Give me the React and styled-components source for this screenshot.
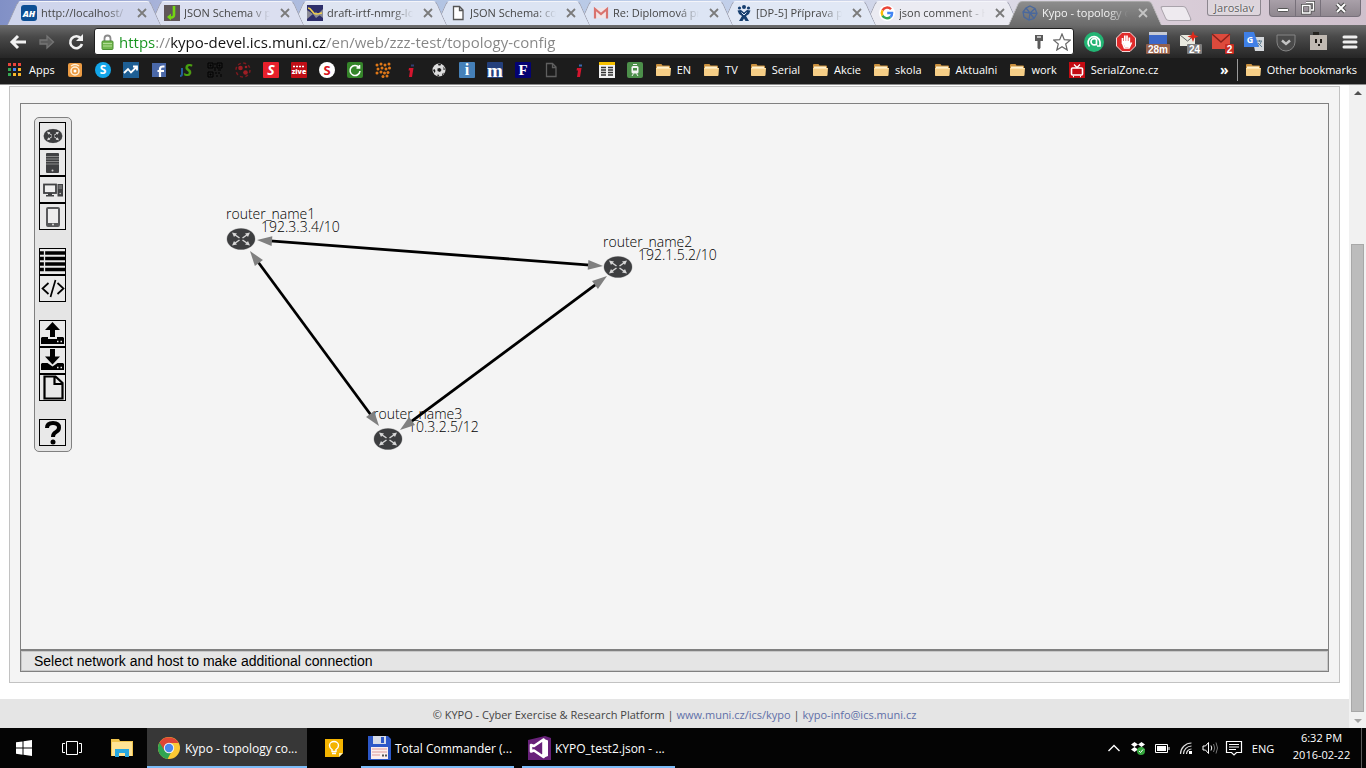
import React from "react";
import styled, { createGlobalStyle, css } from "styled-components";

const ui = '"Segoe UI", "Open Sans", "Noto Sans", sans-serif';

const GlobalStyle = createGlobalStyle`
  *, *::before, *::after { box-sizing: border-box; }
  body { margin: 0; font-family: ${ui}; font-size: 11px; background: #fff; }
  button, input { font-family: inherit; font-size: inherit; }
  a { text-decoration: none; }
`;

const plainButton = css`
  border: 0;
  padding: 0;
  margin: 0;
  background: none;
  color: inherit;
  display: flex;
  align-items: center;
  justify-content: center;
`;

const Screen = styled.div`
  display: flex;
  flex-direction: column;
  min-height: 100vh;
`;

/* ---------- tab strip ---------- */

const TabStrip = styled.header`
  display: flex;
  align-items: flex-start;
  height: 25px;
  padding: 0 5px 0 7px;
  background: linear-gradient(90deg, #8190c6 0, #a9b4da 12%, #b3c6e4 35%, #c3d0ea 55%, #dcdbe8 72%, #d9cdd8 86%, #cfc0cc 100%);
`;

const Tabs = styled.nav`
  display: flex;
  flex: 0 1 1144px;
  min-width: 0;
`;

const Tab = styled.div`
  position: relative;
  z-index: ${(p) => p.$z};
  display: flex;
  align-items: center;
  flex: 1 1 0;
  min-width: 0;
  height: 25px;
  padding: 1px 14px 0;
  margin-right: -11px;
  color: ${(p) => (p.$active ? "#f4f4f4" : "#454545")};

  &::before,
  &::after {
    content: "";
    position: absolute;
    z-index: -1;
    top: 1px;
    bottom: 0;
    width: 60%;
    background: ${(p) => (p.$active ? "linear-gradient(#8c8c8c, #6c6c6c)" : p.$tint)};
    border-top: 1px solid ${(p) => (p.$active ? "#a8a8a8" : "#f4f5fa")};
  }
  &::before {
    left: 0;
    transform-origin: bottom left;
    transform: skewX(-24deg);
    border-left: 1px solid ${(p) => (p.$active ? "#b5b5b5" : "#9a9cab")};
    border-top-left-radius: 4px;
  }
  &::after {
    right: 0;
    transform-origin: bottom right;
    transform: skewX(24deg);
    border-right: 1px solid ${(p) => (p.$active ? "#b5b5b5" : "#9a9cab")};
    border-top-right-radius: 4px;
  }
`;

const TabLink = styled.a`
  display: flex;
  align-items: center;
  gap: 4px;
  flex: 1;
  min-width: 0;
  color: inherit;
`;

const TabTitle = styled.span`
  flex: 1;
  min-width: 0;
  overflow: hidden;
  white-space: nowrap;
  line-height: 16px;
  mask-image: linear-gradient(90deg, #000 76%, transparent);
`;

const TabClose = styled.button`
  ${plainButton}
  width: 10px;
  height: 10px;
  margin-left: 10px;
  color: ${(p) => (p.$active ? "#c4c4c4" : "#7b7b7b")};
`;

const NewTab = styled.button`
  ${plainButton}
  width: 26px;
  height: 15px;
  margin: 6px 0 0 12px;
  border: 1px solid #a9a3ab;
  border-radius: 3px;
  background: #eeeaef;
  transform: skewX(24deg);
`;

const WindowTools = styled.div`
  display: flex;
  gap: 8px;
  margin-left: auto;
  color: #fff;
`;

const Profile = styled.button`
  ${plainButton}
  width: 54px;
  height: 16px;
  border: 1px solid #8c868e;
  border-top: 0;
  border-radius: 0 0 3px 3px;
  background: #ddd5dc;
  color: #5d5d5d;
  line-height: 14px;
  text-shadow: 0 0 2px #fff;
`;

const WindowButtons = styled.div`
  display: flex;
  height: 17px;
  border: 1px solid #77707a;
  border-top: 0;
  border-radius: 0 0 4px 4px;
  background: linear-gradient(#a9a0a9, #8f878f);
  overflow: hidden;
`;

const WindowButton = styled.button`
  ${plainButton}
  width: ${(p) => (p.$wide ? 40 : 25)}px;
  & + & { border-left: 1px solid #77707a; }
`;

/* ---------- address row ---------- */

const AddressRow = styled.div`
  display: flex;
  align-items: center;
  height: 33px;
  padding: 2px 0;
  background: linear-gradient(#6c6c6c, #4a4a4a 35%, #262626);
`;

const NavButton = styled.button`
  ${plainButton}
  width: 29px;
  height: 26px;
  margin-left: ${(p) => (p.$first ? 3 : 0)}px;
  color: ${(p) => (p.$off ? "#757575" : "#f2f2f2")};
`;

const AddressBox = styled.form`
  display: flex;
  align-items: center;
  flex: 1;
  min-width: 0;
  height: 27px;
  margin-left: 4px;
  padding: 0 2px 0 6px;
  gap: 5px;
  background: #fff;
  border: 1px solid #1f1f1f;
  border-radius: 3px;
`;

const AddressInput = styled.input`
  flex: 1;
  min-width: 0;
  height: 24px;
  padding: 0;
  border: 0;
  outline: 0;
  font-size: 15px;
  color: transparent;
  background-image: linear-gradient(90deg, #15931d 37px, #858585 37px 51px, #141414 51px 207px, #858585 207px);
  background-clip: text;
  -webkit-background-clip: text;
`;

const AddressAction = styled.button`
  ${plainButton}
  width: 18px;
  height: 22px;
`;

const Extensions = styled.div`
  display: flex;
  padding-left: 4px;
`;

const Extension = styled.button`
  ${plainButton}
  width: 32px;
  height: 27px;
`;

/* ---------- bookmarks ---------- */

const BookmarkBar = styled.nav`
  display: flex;
  align-items: center;
  gap: 12px;
  height: 27px;
  padding: 0 9px 2px 7px;
  background: #1c1c1c;
  border-bottom: 1px solid #8d8d8d;
  overflow: hidden;
`;

const Bookmark = styled.a`
  display: flex;
  align-items: center;
  gap: 6px;
  flex: none;
  color: #fff;
  line-height: 16px;
  white-space: nowrap;
`;

const Overflow = styled.button`
  ${plainButton}
  margin-left: auto;
  color: #fff;
  font-size: 14px;
  font-weight: 700;
  line-height: 16px;
`;

const OtherBookmarks = styled.div`
  display: flex;
  align-items: center;
  height: 22px;
  margin-left: -4px;
  padding-left: 7px;
  border-left: 1px solid #9a9a9a;
`;

/* ---------- page ---------- */

const Viewport = styled.div`
  display: flex;
  flex: 1;
`;

const Page = styled.div`
  display: flex;
  flex-direction: column;
  flex: 1;
  min-width: 0;
`;

const Panel = styled.main`
  display: flex;
  flex-direction: column;
  flex: 1;
  margin: 1px 9px 16px;
  padding: 16px 10px 10px;
  background: #f4f4f4;
  border: 1px solid #c2c2c2;
`;

const Workspace = styled.section`
  position: relative;
  flex: 1;
  min-height: 360px;
  padding: 13px;
  border: 1px solid #808080;
`;

const Diagram = styled.svg`
  position: absolute;
  inset: 0;
  width: 100%;
  height: 100%;
  font-family: "Open Sans", sans-serif;
  font-size: 14px;
  font-weight: 300;
  fill: #000;
`;

const Palette = styled.div`
  position: relative;
  display: inline-flex;
  flex-direction: column;
  gap: 18px;
  padding: 4px 5px 5px 4px;
  background: #e5e5e5;
  border: 1px solid #808080;
  border-radius: 5px;
`;

const ToolGroup = styled.div`
  display: flex;
  flex-direction: column;
`;

const Tool = styled.button`
  ${plainButton}
  width: 27px;
  height: 27px;
  border: 1px solid #000;
  background: #e9e9e9;
  color: #000;
`;

const Status = styled.div`
  height: 22px;
  padding: 0 13px;
  font-family: Arial, "Liberation Sans", sans-serif;
  font-size: 14px;
  line-height: 20px;
  color: #000;
  background: #e5e5e5;
  border: 1px solid #808080;
  box-shadow: inset 0 0 0 1px #c8c8c8;
`;

const Footer = styled.footer`
  padding: 8px 0 5px;
  text-align: center;
  font-family: "Open Sans", sans-serif;
  font-size: 11px;
  line-height: 16px;
  color: #444;
  background: #e5e5e5;
  a { color: #5f6fa8; }
`;

const ScrollTrack = styled.div`
  display: flex;
  flex-direction: column;
  align-items: center;
  width: 17px;
  padding: 6px 0 5px;
  background: #f1f1f1;
`;

const ScrollArrow = styled.span`
  width: 0;
  height: 0;
  border: 4px solid transparent;
  border-top-width: ${(p) => (p.$down ? 4 : 0)}px;
  border-bottom-width: ${(p) => (p.$down ? 0 : 4)}px;
  border-top-color: ${(p) => (p.$down ? "#a3a3a3" : "transparent")};
  border-bottom-color: ${(p) => (p.$down ? "transparent" : "#505050")};
`;

const ScrollThumb = styled.div`
  width: 13px;
  height: 74%;
  margin: auto 0 7px;
  background: #bcbcbc;
  border: 1px solid #a8a8a8;
`;

/* ---------- taskbar ---------- */

const Taskbar = styled.footer`
  display: flex;
  height: 40px;
  background: #040404;
  color: #fff;
`;

const Launcher = styled.button`
  ${plainButton}
  width: ${(p) => p.$w || 49}px;
  height: 40px;
`;

const Task = styled.button`
  ${plainButton}
  justify-content: flex-start;
  gap: 4px;
  width: ${(p) => (p.$active ? 160 : 153)}px;
  height: 40px;
  padding: 2px 0 0 ${(p) => (p.$active ? 10 : 6)}px;
  margin-right: ${(p) => (p.$active ? 0 : 8)}px;
  background: ${(p) => (p.$active ? "#373737" : "transparent")};
  border-bottom: 2px solid #7cbcf8;
  font-size: 12px;
  white-space: nowrap;
`;

const Tray = styled.div`
  display: flex;
  align-items: center;
  gap: 4px;
  margin-left: auto;
  padding-right: 4px;
`;

const TrayButton = styled.button`
  ${plainButton}
  width: 20px;
  height: 40px;
`;

const Language = styled.button`
  ${plainButton}
  width: 30px;
  height: 40px;
`;

const Clock = styled.time`
  width: 80px;
  padding: 1px 0 5px;
  text-align: center;
  line-height: 17px;
  border-right: 1px solid #5a5a5a;
`;

/* ---------- drawings ---------- */

const Svg = ({ w = 16, h = w, box = `0 0 ${w} ${h}`, children }) => (
  <svg width={w} height={h} viewBox={box} fill="none" aria-hidden="true">
    {children}
  </svg>
);

const Letter = ({ bg, fg = "#fff", children, family = "Open Sans", size = 13, round, x = 8, y = 13, italic }) => (
  <Svg>
    {round ? <circle cx="8" cy="8" r="8" fill={bg} /> : <rect width="16" height="16" rx="1" fill={bg} />}
    <text x={x} y={y} textAnchor="middle" fill={fg} fontFamily={family} fontWeight="700" fontSize={size} fontStyle={italic ? "italic" : "normal"}>
      {children}
    </text>
  </Svg>
);

const FileIcon = ({ stroke = "#555", fill = "none" }) => (
  <Svg>
    <path d="M3.5 1.5h6l3.5 3.5v9.5h-9.500zM9.500 1.500v4h3.500" stroke={stroke} fill={fill} strokeWidth="1.300" />
  </Svg>
);

const Folder = () => (
  <Svg>
    <path d="M1 3q0-1 1-1h4.500l1 1.500h6.500q1 0 1 1v8.500q0 1-1 1H2q-1 0-1-1z" fill="#c98f3d" />
    <path d="M2 4.500h12V6H2z" fill="#fff0cc" />
    <path d="M1 6h15l-.5 7q0 1-1 1H2q-1 0-1-1z" fill="#f6ce86" />
    <path d="M1.500 6.500h14" stroke="#fde4b0" />
  </Svg>
);

const GoogleG = () => (
  <Svg>
    <circle cx="8" cy="8" r="8" fill="#fff" />
    <g strokeWidth="2.400">
      <path d="M12 4.300A5.200 5.200 0 0 0 3.500 5.400" stroke="#ea4335" />
      <path d="M3.500 5.400a5.200 5.200 0 0 0 0 5.200" stroke="#fbbc05" />
      <path d="M3.500 10.600a5.200 5.200 0 0 0 7.900 1.400" stroke="#34a853" />
      <path d="M11.400 12a5 5 0 0 0 1.700-4H8.200" stroke="#4285f4" />
    </g>
  </Svg>
);

const Gmail = () => (
  <Svg>
    <path d="M1 3h14v10H1z" fill="#f1e4e6" />
    <path d="M2 13.500V4l6 5 6-5v9.500" stroke="#d9736e" strokeWidth="2.200" />
  </Svg>
);

const Jira = () => (
  <Svg>
    <g fill="#173f6f">
      <circle cx="8" cy="2" r="2" />
      <circle cx="3.500" cy="3" r="1.600" />
      <circle cx="12.500" cy="3" r="1.600" />
      <path d="M1.500 5.500L5 5l3 2.500L11 5l3.500.5L13 9l-3 2 3 5h-3.500L8 13.500 6.500 16H3l3-5-3-2z" />
    </g>
    <path d="M5.500 7.500L8 10l2.500-2.500" stroke="#dfe7f4" />
  </Svg>
);

const KypoMark = () => (
  <Svg>
    <path d="M8 1l5 2.500 2 5-3 5-5 1.500-5-3L1 7l3-4zM4 3l4 5 5-4.500M8 8L1 7M8 8l7 .5M8 8l-1 7M8 8l4 5.500" stroke="#4a689c" strokeWidth="1.300" />
  </Svg>
);

const Cross = () => (
  <Svg w={10}>
    <path d="M1 1l8 8M9 1L1 9" stroke="currentColor" strokeWidth="1.800" />
  </Svg>
);

const AtlasTab = () => (
  <Svg>
    <rect width="16" height="16" rx="3" fill="#0d4f94" />
    <text x="8" y="12" textAnchor="middle" fill="#fff" fontFamily="Open Sans" fontWeight="800" fontStyle="italic" fontSize="9">AH</text>
  </Svg>
);

const JsonSchemaTab = () => (
  <Svg>
    <rect width="16" height="16" fill="#5f5658" />
    <path d="M10 1v9q0 3-5 2.500" stroke="#74d613" strokeWidth="2.600" />
    <path d="M3 12l4-3.500v7z" fill="#74d613" />
  </Svg>
);

const IetfTab = () => (
  <Svg>
    <rect width="16" height="16" fill="#2e2f6b" />
    <path d="M0 5l6 4-6 5zM16 4v9l-5-4zM6 9l3-2 4 3-4 3z" fill="#8b8c95" />
    <path d="M1 3c4 0 4 6 8 6s4-1 6-1" stroke="#f5d24a" strokeWidth="1.500" />
  </Svg>
);

const RouterGlyph = () => (
  <g>
    <ellipse rx="14.500" ry="11" fill="#bdbdbd" />
    <ellipse rx="14" ry="10.500" fill="#3d3e40" />
    <path d="M-1.500-1l-5-3.500M1.500-1l5-3.500M-1.500 1l-5 3.500M1.500 1l5 3.500" stroke="#d6d6d6" strokeWidth="1.500" />
    <path d="M-9-6.500l5 1-3 3.500zM9-6.500l-5 1 3 3.500zM-9 6.500l5-1-3-3.500zM9 6.500l-5-1 3-3.500z" fill="#d6d6d6" />
  </g>
);

const toolIcons = {
  router: (
    <Svg w={20} h={16} box="-15 -12 30 24"><RouterGlyph /></Svg>
  ),
  server: (
    <Svg w={15} h={20}>
      <rect x="1" width="13" height="20" rx="1" fill="#404143" />
      <path d="M1 3.500h13M1 6h13M1 8.500h13M1 11h13" stroke="#9c9c9c" strokeWidth=".8" />
      <circle cx="7.500" cy="17.500" r="1" fill="#ccc" />
    </Svg>
  ),
  desktop: (
    <Svg w={20} h={14}>
      <rect x="1" y="1.500" width="12" height="8.500" fill="#efefef" stroke="#404143" strokeWidth="1.800" />
      <path d="M5 10h4v2h2v1.500H3V12h2zM14.500 1H20v12.500h-5.500z" fill="#404143" />
      <path d="M15.500 3h3.500M15.500 5h3.500" stroke="#bbb" strokeWidth=".7" />
      <circle cx="17.200" cy="10.500" r=".8" fill="#ccc" />
    </Svg>
  ),
  tablet: (
    <Svg w={14} h={20}>
      <rect x="1" y="1" width="12" height="18" rx="1" fill="#ededed" stroke="#58595b" strokeWidth="2" />
      <path d="M1 16h12v3H1z" fill="#58595b" />
      <circle cx="7" cy="17.500" r="1" fill="#ddd" />
    </Svg>
  ),
  list: (
    <Svg w={25} h={21}>
      <path d="M0 2h25M0 7.500h25M0 13h25M0 18.500h25" stroke="#000" strokeWidth="3.600" />
      <path d="M4.500 0v21" stroke="#e9e9e9" strokeWidth="1.300" />
    </Svg>
  ),
  code: (
    <Svg w={24} h={19}>
      <path d="M7.500 4L1.500 9.500l6 5.500M16.500 4l6 5.500-6 5.500M14.500 1l-5 17" stroke="#000" strokeWidth="1.700" />
    </Svg>
  ),
  upload: (
    <Svg w={25} h={25}>
      <path d="M12.500 1l7.500 8h-5v7h-5V9H5z" fill="#000" />
      <path d="M2 16h6v2h9v-2h6l1 1v6H1v-6z" fill="#000" />
      <path d="M17 20.500h1.500M20.500 20.500h1.500" stroke="#e9e9e9" strokeWidth="1.500" />
    </Svg>
  ),
  download: (
    <Svg w={25} h={25}>
      <path d="M10 1h5v7.500h5l-7.500 8-7.500-8h5z" fill="#000" />
      <path d="M2 15h5.500l5 3.500 5-3.500H23l1 1v6H1v-6z" fill="#000" />
      <path d="M17 19.500h1.500M20.500 19.500h1.500" stroke="#e9e9e9" strokeWidth="1.500" />
    </Svg>
  ),
  file: (
    <Svg w={22} h={25}>
      <path d="M2.500 1.500h11L20.500 8v15.500h-18zM12.500 1.500V9h8" stroke="#000" strokeWidth="2.200" />
    </Svg>
  ),
  help: (
    <Svg w={18} h={25}>
      <path d="M3 8q0-5 6-5t6 4.500q0 3-3 4.500t-3 5" stroke="#000" strokeWidth="4" />
      <circle cx="9" cy="22" r="2.500" fill="#000" />
    </Svg>
  ),
};

const toolGroups = [
  [["router", "Add router"], ["server", "Add server"], ["desktop", "Add desktop"], ["tablet", "Add tablet"]],
  [["list", "List"], ["code", "Source"]],
  [["upload", "Upload"], ["download", "Download"], ["file", "New topology"]],
  [["help", "Help"]],
];

const tabs = [
  { title: "http://localhost/", icon: <AtlasTab />, tint: "#cfd5ec" },
  { title: "JSON Schema v praxi", icon: <JsonSchemaTab />, tint: "#dbdff0" },
  { title: "draft-irtf-nmrg-location", icon: <IetfTab />, tint: "#dfe5f2" },
  { title: "JSON Schema: core", icon: <FileIcon fill="#fff" />, tint: "#dce4f3" },
  { title: "Re: Diplomová práce", icon: <Gmail />, tint: "#dde5f4" },
  { title: "[DP-5] Příprava pro", icon: <Jira />, tint: "#e1e8f5" },
  { title: "json comment - Hledat", icon: <GoogleG />, tint: "#ebebf2" },
  { title: "Kypo - topology config", icon: <KypoMark />, active: true },
];

const AppsGrid = () => (
  <Svg>
    {["#e8453c", "#e8453c", "#e8453c", "#35a853", "#4285f4", "#f7b529", "#35a853", "#f7b529", "#f7b529"].map((c, i) => (
      <rect key={i} x={1 + (i % 3) * 5} y={1 + Math.floor(i / 3) * 5} width="3" height="3" fill={c} />
    ))}
  </Svg>
);

const dots = [[2, 3], [6, 2], [10, 3], [14, 2], [3, 7], [7, 6], [11, 7], [14.500, 6], [6, 10], [9.500, 11], [13, 10.500], [8, 14.500], [12, 14], [2, 11]];

const bookmarks = [
  { name: "Apps", label: "Apps", icon: <AppsGrid /> },
  {
    name: "Camera",
    icon: (
      <Svg>
        <rect x="1" y="1" width="14" height="14" rx="2" fill="#eb9b43" />
        <circle cx="8" cy="9" r="4" stroke="#fff0d8" strokeWidth="1.500" />
        <circle cx="8" cy="9" r="1.500" fill="#fff" />
        <path d="M4 4q4-3 8 0" stroke="#fff0d8" strokeWidth="1.300" />
      </Svg>
    ),
  },
  { name: "Skype", icon: <Letter bg="#12a5e8" round size={12} y={12}>S</Letter> },
  {
    name: "Stocks",
    icon: (
      <Svg>
        <rect width="16" height="16" fill="#1e5f94" />
        <path d="M1 11l4-4 3 3.500L13.500 5M10 4.500h4v4" stroke="#fff" strokeWidth="1.800" />
      </Svg>
    ),
  },
  {
    name: "Facebook",
    icon: (
      <Svg>
        <rect x="1" y="1" width="14" height="14" fill="#4a68a8" />
        <path d="M9 15V7q0-2.500 3-2.500h1.500M6.500 9h6.500" stroke="#fff" strokeWidth="2.200" />
      </Svg>
    ),
  },
  {
    name: "IS",
    icon: (
      <Svg>
        <path d="M3 6v6q0 2-2 2" stroke="#255d9a" strokeWidth="2" />
        <text x="9" y="14" textAnchor="middle" fill="#49a010" fontFamily="Open Sans" fontWeight="700" fontStyle="italic" fontSize="16">S</text>
      </Svg>
    ),
  },
  {
    name: "QR",
    icon: (
      <Svg>
        <path d="M1 1h5v5H1zM10 1h5v5h-5zM1 10h5v5H1zM3 3h1v1H3zM12 3h1v1h-1zM3 12h1v1H3zM8 1v2M8 5v2M7 8h2M11 8h3M9 10v2M12 10v2M14 12v3M9 14h2" stroke="#000" strokeWidth="1" />
      </Svg>
    ),
  },
  {
    name: "Football",
    icon: (
      <Svg>
        <circle cx="8" cy="8" r="7" stroke="#7c1a1f" strokeWidth="1.500" strokeDasharray="3 2.500" />
        <circle cx="5.500" cy="6" r="2.300" fill="#a01e25" />
        <circle cx="10.500" cy="10.500" r="2.300" fill="#a01e25" />
        <circle cx="11" cy="5" r="1.300" fill="#a01e25" />
      </Svg>
    ),
  },
  { name: "S", icon: <Letter bg="#e8202b" italic size={14}>S</Letter> },
  {
    name: "Živě",
    icon: (
      <Svg>
        <rect width="16" height="16" rx="1" fill="#c00f17" />
        <path d="M2 4.500h12" stroke="#fff" strokeWidth="1.500" strokeDasharray="2 1" />
        <text x="8" y="12" textAnchor="middle" fill="#fff" fontFamily="Open Sans" fontWeight="800" fontSize="7">zive</text>
      </Svg>
    ),
  },
  { name: "Seznam", icon: <Letter bg="#fff" fg="#d9131c" round size={13}>S</Letter> },
  {
    name: "Reload",
    icon: (
      <Svg>
        <rect width="16" height="16" rx="2" fill="#35852a" />
        <path d="M12 5.500A5 5 0 1 0 13 9M12.500 3v3h-3" stroke="#fff" strokeWidth="1.600" />
      </Svg>
    ),
  },
  { name: "Dots", icon: <Svg>{dots.map(([x, y], i) => <circle key={i} cx={x} cy={y} r="1.500" fill="#df7818" />)}</Svg> },
  { name: "iDnes", icon: <Svg><path d="M6 6h4.500l-1.500 9H6l1-6.500H5.500z" fill="#d4152e" /><path d="M8 3.500h3" stroke="#303f70" strokeWidth="2" /></Svg> },
  {
    name: "Soccer",
    icon: (
      <Svg>
        <circle cx="8" cy="8" r="6.500" fill="#dcdcdc" />
        <path d="M6.500 6.500l2.500-.5 1.500 2-1.500 2-2.500-1zM2 8l1.500-1 1 2-1 2zM7 2l3 0-.5 1.500-2 0zM12.500 4.500l1.500 3-1.500.5zM11 12l2-1.500-1.500 3zM5.500 13l2-.5 1 2z" fill="#1c1c1c" />
      </Svg>
    ),
  },
  { name: "Info", icon: <Letter bg="#4580b8" family="Liberation Serif" size={16}>i</Letter> },
  { name: "Mapy", icon: <Letter bg="#24407c" family="Liberation Serif" size={19} y={15}>m</Letter> },
  { name: "F", icon: <Letter bg="#040272" family="Liberation Serif" size={15}>F</Letter> },
  { name: "Blank", icon: <FileIcon stroke="#5f5f5f" /> },
  { name: "iDnes sport", icon: <Svg><path d="M6 6h4.500l-1.500 9H6l1-6.500H5.500z" fill="#d4152e" /><path d="M8 3.500h3" stroke="#3b69b0" strokeWidth="2" /></Svg> },
  {
    name: "Timetable",
    icon: (
      <Svg>
        <rect width="16" height="16" fill="#f2f2f2" />
        <path d="M0 1.500h16" stroke="#f6c000" strokeWidth="3" />
        <path d="M2 5.500h5M9 5.500h5M2 8h5M9 8h5M2 10.500h5M9 10.500h5M2 13h5M9 13h5" stroke="#333" strokeWidth="1.400" />
      </Svg>
    ),
  },
  {
    name: "Train",
    icon: (
      <Svg>
        <rect width="16" height="16" rx="2" fill="#4c8f4a" />
        <rect x="4.500" y="4" width="7" height="7.500" rx="1.500" fill="#f4f4f4" />
        <path d="M6 6h4v2.500H6z" fill="#4c8f4a" />
        <path d="M6 2.500h4M5 14l1.500-2.500M11 14l-1.500-2.500" stroke="#f4f4f4" />
      </Svg>
    ),
  },
  ...["EN", "TV", "Serial", "Akcie", "skola", "Aktualni", "work"].map((n) => ({ name: n, label: n, icon: <Folder /> })),
  {
    name: "SerialZone.cz",
    label: "SerialZone.cz",
    icon: (
      <Svg>
        <rect width="16" height="16" fill="#c50b12" />
        <rect x="2.500" y="6" width="11" height="7" rx="1" stroke="#fff" strokeWidth="1.600" />
        <path d="M5 2.500l3 3 3-3M4 14.500h1M11 14.500h1" stroke="#fff" strokeWidth="1.300" />
      </Svg>
    ),
  },
];

const Badge = ({ x, w, fill, children }) => (
  <g>
    <rect x={x} y="15" width={w} height="10" rx="1" fill={fill} />
    <text x={x + w / 2} y="24" textAnchor="middle" fill="#fff" fontFamily="Liberation Sans" fontWeight="700" fontSize="10">{children}</text>
  </g>
);

const extensions = [
  ["Grammarly", (
    <Svg w={26}>
      <circle cx="13" cy="13" r="10" fill="#23b574" />
      <path d="M8.500 17.500a6 6 0 1 1 10.500-4.500v4h-3M15.500 15a3.200 3.200 0 1 1 0-4.500v6" stroke="#fff" strokeWidth="1.700" />
    </Svg>
  )],
  ["AdBlock", (
    <Svg w={26}>
      <path d="M9 3.500h8l5.500 5.500v8L17 22.500H9L3.500 17V9z" fill="#e12b2b" stroke="#f5dada" />
      <path d="M9.500 15V9M11.800 13V6.500M14 13V6.500M16.300 14V8.500M9.500 14l2 5h4.500l2.500-5.500" stroke="#fff" strokeWidth="1.700" />
      <path d="M9 12h8v6h-5z" fill="#fff" />
    </Svg>
  )],
  ["Calendar", (
    <Svg w={26}>
      <path d="M4 3h18v12H4z" fill="#3b67c8" /><path d="M4 3h18v3H4z" fill="#c6cad5" />
      <Badge x={1} w={24} fill="#94604a">28m</Badge>
    </Svg>
  )],
  ["Mail", (
    <Svg w={26}>
      <path d="M3 6h15v11H3z" fill="#e9e9df" /><path d="M3 6l7.500 6L18 6" stroke="#666" />
      <path d="M16 2l1.500 4 4 1.500-4 1.500L16 13l-1.500-4-4-1.500 4-1.500z" fill="#dc2a1b" />
      <Badge x={10} w={15} fill="#7d7d7d">24</Badge>
    </Svg>
  )],
  ["Gmail", (
    <Svg w={26}>
      <path d="M3 5h18v15H3z" fill="#dd4a3c" /><path d="M3 5l9 8 9-8" stroke="#87221c" strokeWidth="1.500" />
      <Badge x={16} w={9} fill="#c92c22">2</Badge>
    </Svg>
  )],
  ["Translate", (
    <Svg w={26}>
      <path d="M11 8h12v14H14z" fill="#d5d8dc" /><path d="M3 3h10l5 15H3z" fill="#3f7fe6" />
      <text x="9" y="14" textAnchor="middle" fill="#fff" fontFamily="Open Sans" fontWeight="700" fontSize="9">G</text>
      <path d="M16 12h5M18.500 11v2M20.500 12q-1 4-4 5M17 14l4 4" stroke="#5f7f93" />
    </Svg>
  )],
  ["Pocket", (
    <Svg w={26}>
      <path d="M4 6h18v7a9 9 0 0 1-18 0z" fill="#4a4a4a" stroke="#858585" />
      <path d="M9 11.500l4 3.500 4-3.500" stroke="#c4c4c4" strokeWidth="2.400" />
    </Svg>
  )],
  ["Ghost", (
    <Svg w={26}>
      <path d="M5 6h17v15H5z" fill="#c0b9b2" /><path d="M8 3h6v3H8z" fill="#25231f" />
      <path d="M11 10v4M16 10v4M13 16h2" stroke="#201c18" strokeWidth="2" />
    </Svg>
  )],
  ["Menu", (
    <Svg w={26}>
      <path d="M7 8h12M7 13h12M7 18h12" stroke="#eee" strokeWidth="3" strokeLinecap="round" />
    </Svg>
  )],
];

const routers = [
  { name: "router_name1", ip: "192.3.3.4/10", x: 220, y: 135 },
  { name: "router_name2", ip: "192.1.5.2/10", x: 597, y: 163 },
  { name: "router_name3", ip: "10.3.2.5/12", x: 367, y: 335 },
];

const links = [
  { x1: 236, y1: 136, x2: 582, y2: 162 },
  { x1: 229, y1: 147, x2: 358, y2: 322 },
  { x1: 379, y1: 326, x2: 586, y2: 172 },
];

const Arrow = ({ x, y, angle }) => (
  <path d="M0 0L-15 5V-5z" fill="#808080" transform={`translate(${x} ${y}) rotate(${angle})`} />
);

const Link = ({ x1, y1, x2, y2 }) => {
  const rad = Math.atan2(y2 - y1, x2 - x1);
  const deg = (rad * 180) / Math.PI;
  const dx = Math.cos(rad) * 13;
  const dy = Math.sin(rad) * 13;
  return (
    <g>
      <line x1={x1 + dx} y1={y1 + dy} x2={x2 - dx} y2={y2 - dy} stroke="#000" strokeWidth="2.800" />
      <Arrow x={x1} y={y1} angle={deg + 180} />
      <Arrow x={x2} y={y2} angle={deg} />
    </g>
  );
};

const Topology = () => (
  <Diagram role="img" aria-label="Network topology">
    {routers.map((r) => (
      <g key={r.name} transform={`translate(${r.x} ${r.y})`}>
        <RouterGlyph />
        <text x="-15" y="-20">{r.name}</text>
        <text x="20" y="-7">{r.ip}</text>
      </g>
    ))}
    {links.map((l, i) => <Link key={i} {...l} />)}
  </Diagram>
);

const tray = [
  ["Show hidden icons", <Svg w={14}><path d="M1.500 10L7 4.500 12.500 10" stroke="#fff" strokeWidth="1.400" /></Svg>],
  ["Dropbox", (
    <Svg w={16}>
      <path d="M4.500 2L8 4.500 4.500 7 1 4.500zM11.500 2L15 4.500 11.500 7 8 4.500zM4.500 7L8 9.500 4.500 12 1 9.500zM11.500 7L15 9.500 11.500 12 8 9.500z" fill="#fff" />
      <circle cx="11" cy="11" r="4" fill="#33a53c" /><path d="M9 11l1.500 1.500L13 9.500" stroke="#fff" />
    </Svg>
  )],
  ["Battery", <Svg w={16}><path d="M1.500 4.500h12v8h-12zM15 7v3" stroke="#fff" /><path d="M3 6h9v5H3z" fill="#fff" /></Svg>],
  ["Wi-Fi", <Svg w={16}><path d="M2.500 14A11 11 0 0 1 13.500 3M5.500 14a8 8 0 0 1 8-8M8.500 14a5 5 0 0 1 5-5" stroke="#ddd" strokeWidth="1.200" /><rect x="11" y="11" width="3" height="3" fill="#fff" /></Svg>],
  ["Volume", <Svg w={16}><path d="M1 6h2.500l3-3.500v11L3.500 10H1z" stroke="#fff" /><path d="M9 5.500q1.500 2.500 0 5" stroke="#fff" /><path d="M11.500 4q2.500 4 0 8M14 2.500q3 5.500 0 11" stroke="#777" /></Svg>],
  ["Notifications", <Svg w={18}><path d="M1.500 2.500h15v11h-5L9 16l-2.500-2.500h-5zM4 5.500h10M4 8h10M4 10.500h7" stroke="#fff" strokeWidth="1.200" /></Svg>],
];

const Chrome = () => (
  <Svg w={24}>
    <circle cx="12" cy="12" r="11" fill="#fcc934" />
    <path d="M12 12L2.500 6.500A11 11 0 0 0 10.500 23l5-9z" fill="#2fa552" />
    <path d="M2.500 6.500A11 11 0 0 1 21.600 7H12l-4.500 7.500z" fill="#df4535" />
    <circle cx="12" cy="12" r="5.200" fill="#f3f3f3" />
    <circle cx="12" cy="12" r="4.200" fill="#4a87ee" />
  </Svg>
);

const Floppy = () => (
  <Svg w={24}>
    <path d="M1 0h20l3 3v21H1z" fill="#2c57c8" />
    <path d="M6 0h13v8H6z" fill="#d6dbe8" /><path d="M14 1h3v6h-3z" fill="#2c57c8" />
    <path d="M4 11h17v12H4z" fill="#fbeeee" />
    <path d="M5 13h15M5 16h15M5 19h8" stroke="#dd9a9a" />
    <path d="M15 19.500h5" stroke="#555" strokeWidth="2" strokeDasharray="2 1" />
  </Svg>
);

const VisualStudio = () => (
  <Svg w={23} h={24}>
    <path d="M0 4l17-4 6 2v22H0z" fill="#68217a" />
    <path d="M3 9v6.500l3-1 9.500 6.500V3.500L6 10z" stroke="#fff" strokeWidth="2.600" strokeLinejoin="round" />
    <path d="M15 2.500l5 2v15.500l-5 2z" fill="#fff" />
  </Svg>
);

export default function App() {
  const stop = (e) => e.preventDefault();
  return (
    <Screen>
      <GlobalStyle />
      <TabStrip>
        <Tabs aria-label="Tabs">
          {tabs.map((t, i) => (
            <Tab key={t.title} $active={t.active} $tint={t.tint} $z={t.active ? 20 : 10 - i}>
              <TabLink href="#">
                {t.icon}
                <TabTitle>{t.title}</TabTitle>
              </TabLink>
              <TabClose $active={t.active} aria-label="Close tab"><Cross /></TabClose>
            </Tab>
          ))}
        </Tabs>
        <NewTab aria-label="New tab" />
        <WindowTools>
          <Profile>Jaroslav</Profile>
          <WindowButtons>
            <WindowButton aria-label="Minimize">
              <Svg w={14}><rect x="1.500" y="7.500" width="11" height="3" rx="1" fill="#fff" stroke="#555" /></Svg>
            </WindowButton>
            <WindowButton aria-label="Restore">
              <Svg w={14}>
                <path d="M5 1.500h7.500V9H10M1.500 4.500H9V12H1.500z" stroke="#4c4c4c" strokeWidth="3" />
                <path d="M5 1.500h7.500V9H10M1.500 4.500H9V12H1.500z" stroke="#fff" strokeWidth="1.400" />
              </Svg>
            </WindowButton>
            <WindowButton $wide aria-label="Close">
              <Svg w={14}>
                <path d="M3 3l8 8M11 3l-8 8" stroke="#4c4c4c" strokeWidth="4" />
                <path d="M3 3l8 8M11 3l-8 8" stroke="#fff" strokeWidth="2" />
              </Svg>
            </WindowButton>
          </WindowButtons>
        </WindowTools>
      </TabStrip>

      <AddressRow>
        <NavButton $first aria-label="Back">
          <Svg w={18}><path d="M9 3L3 9l6 6M3 9h14" stroke="currentColor" strokeWidth="3" /></Svg>
        </NavButton>
        <NavButton $off aria-label="Forward">
          <Svg w={18}><path d="M2 7h7V3l6.500 6L9 15v-4H2z" stroke="currentColor" strokeWidth="1.300" fill="#5c5c5c" /></Svg>
        </NavButton>
        <NavButton aria-label="Reload">
          <Svg w={18}>
            <path d="M14 5.500A6 6 0 1 0 15 11" stroke="currentColor" strokeWidth="2.600" />
            <path d="M16 1v7H9z" fill="currentColor" />
          </Svg>
        </NavButton>
        <AddressBox onSubmit={stop}>
          <Svg w={13} h={16}>
            <path d="M3.500 8V4.500a3 3 0 0 1 6 0V8" stroke="#8a8a8a" strokeWidth="1.800" />
            <rect x="1" y="7" width="11" height="8.500" rx="1" fill="#74b84f" stroke="#4b8f31" />
            <path d="M2 9.500h9M2 12h9" stroke="#b2dd96" />
          </Svg>
          <AddressInput
            aria-label="Address"
            defaultValue="https://kypo-devel.ics.muni.cz/en/web/zzz-test/topology-config"
          />
          <AddressAction type="button" aria-label="Saved password">
            <Svg w={12} h={16}>
              <path d="M2 1h8v6H7.500v7L6 15.500 4.500 14V7H2z" fill="#5a5a5a" /><path d="M4 3h4" stroke="#fff" strokeWidth="1.200" />
            </Svg>
          </AddressAction>
          <AddressAction type="button" aria-label="Bookmark this page">
            <Svg w={18}>
              <path d="M9 1l2.300 5.700 6 .4-4.600 3.900 1.500 6L9 13.700 3.800 17l1.500-6L.7 7.100l6-.4z" stroke="#666" strokeWidth="1.200" />
            </Svg>
          </AddressAction>
        </AddressBox>
        <Extensions>
          {extensions.map(([name, icon]) => (
            <Extension key={name} aria-label={name}>{icon}</Extension>
          ))}
        </Extensions>
      </AddressRow>

      <BookmarkBar aria-label="Bookmarks">
        {bookmarks.map((b) => (
          <Bookmark key={b.name} href="#" aria-label={b.name}>
            {b.icon}
            {b.label}
          </Bookmark>
        ))}
        <Overflow aria-label="More bookmarks">»</Overflow>
        <OtherBookmarks>
          <Bookmark href="#"><Folder />Other bookmarks</Bookmark>
        </OtherBookmarks>
      </BookmarkBar>

      <Viewport>
        <Page>
          <Panel>
            <Workspace>
              <Topology />
              <Palette role="toolbar" aria-label="Topology tools">
                {toolGroups.map((group) => (
                  <ToolGroup key={group[0][0]}>
                    {group.map(([id, label]) => (
                      <Tool key={id} aria-label={label}>{toolIcons[id]}</Tool>
                    ))}
                  </ToolGroup>
                ))}
              </Palette>
            </Workspace>
            <Status role="status">Select network and host to make additional connection</Status>
          </Panel>
          <Footer>
            © KYPO - Cyber Exercise &amp; Research Platform | <a href="#">www.muni.cz/ics/kypo</a> | <a href="#">kypo-info@ics.muni.cz</a>
          </Footer>
        </Page>
        <ScrollTrack aria-hidden="true">
          <ScrollArrow />
          <ScrollThumb />
          <ScrollArrow $down />
        </ScrollTrack>
      </Viewport>

      <Taskbar>
        <Launcher $w={48} aria-label="Start">
          <Svg w={16}><path d="M0 2.300L6.500 1.400V7.500H0zM7.500 1.200L16 0v7.500H7.500zM0 8.500h6.500v6.200L0 13.800zM7.500 8.500H16V16l-8.500-1.200z" fill="#fff" /></Svg>
        </Launcher>
        <Launcher $w={48} aria-label="Task view">
          <Svg w={20} h={16}><path d="M4.500 1.500h11v13h-11zM3 3.500H.5v9H3M17 3.500h2.500v9H17" stroke="#fff" /></Svg>
        </Launcher>
        <Launcher $w={51} aria-label="File Explorer">
          <Svg w={22} h={20}>
            <path d="M0 1h8l1 2h13v15H0z" fill="#f0c44d" /><path d="M1 4h20v14H1z" fill="#ffe394" />
            <path d="M4 19v-8h14v8h-4v-4H8v4z" fill="#28a8e0" />
          </Svg>
        </Launcher>
        <Task $active><Chrome />Kypo - topology co...</Task>
        <Launcher $w={54} aria-label="Keep">
          <Svg w={18}>
            <path d="M0 0h18v14l-4 4H0z" fill="#f4b400" /><path d="M18 14h-4v4z" fill="#fff0b8" />
            <path d="M7 10.500Q4.500 9 4.500 6.500a4.500 4 0 0 1 9 0q0 2.500-2.500 4v2H7zM7 14.500h4" stroke="#fff" strokeWidth="1.400" />
          </Svg>
        </Launcher>
        <Task><Floppy />Total Commander (...</Task>
        <Task><VisualStudio />KYPO_test2.json - ...</Task>
        <Tray>
          {tray.map(([name, icon]) => (
            <TrayButton key={name} aria-label={name}>{icon}</TrayButton>
          ))}
          <Language>ENG</Language>
          <Clock>6:32 PM<br />2016-02-22</Clock>
        </Tray>
      </Taskbar>
    </Screen>
  );
}
